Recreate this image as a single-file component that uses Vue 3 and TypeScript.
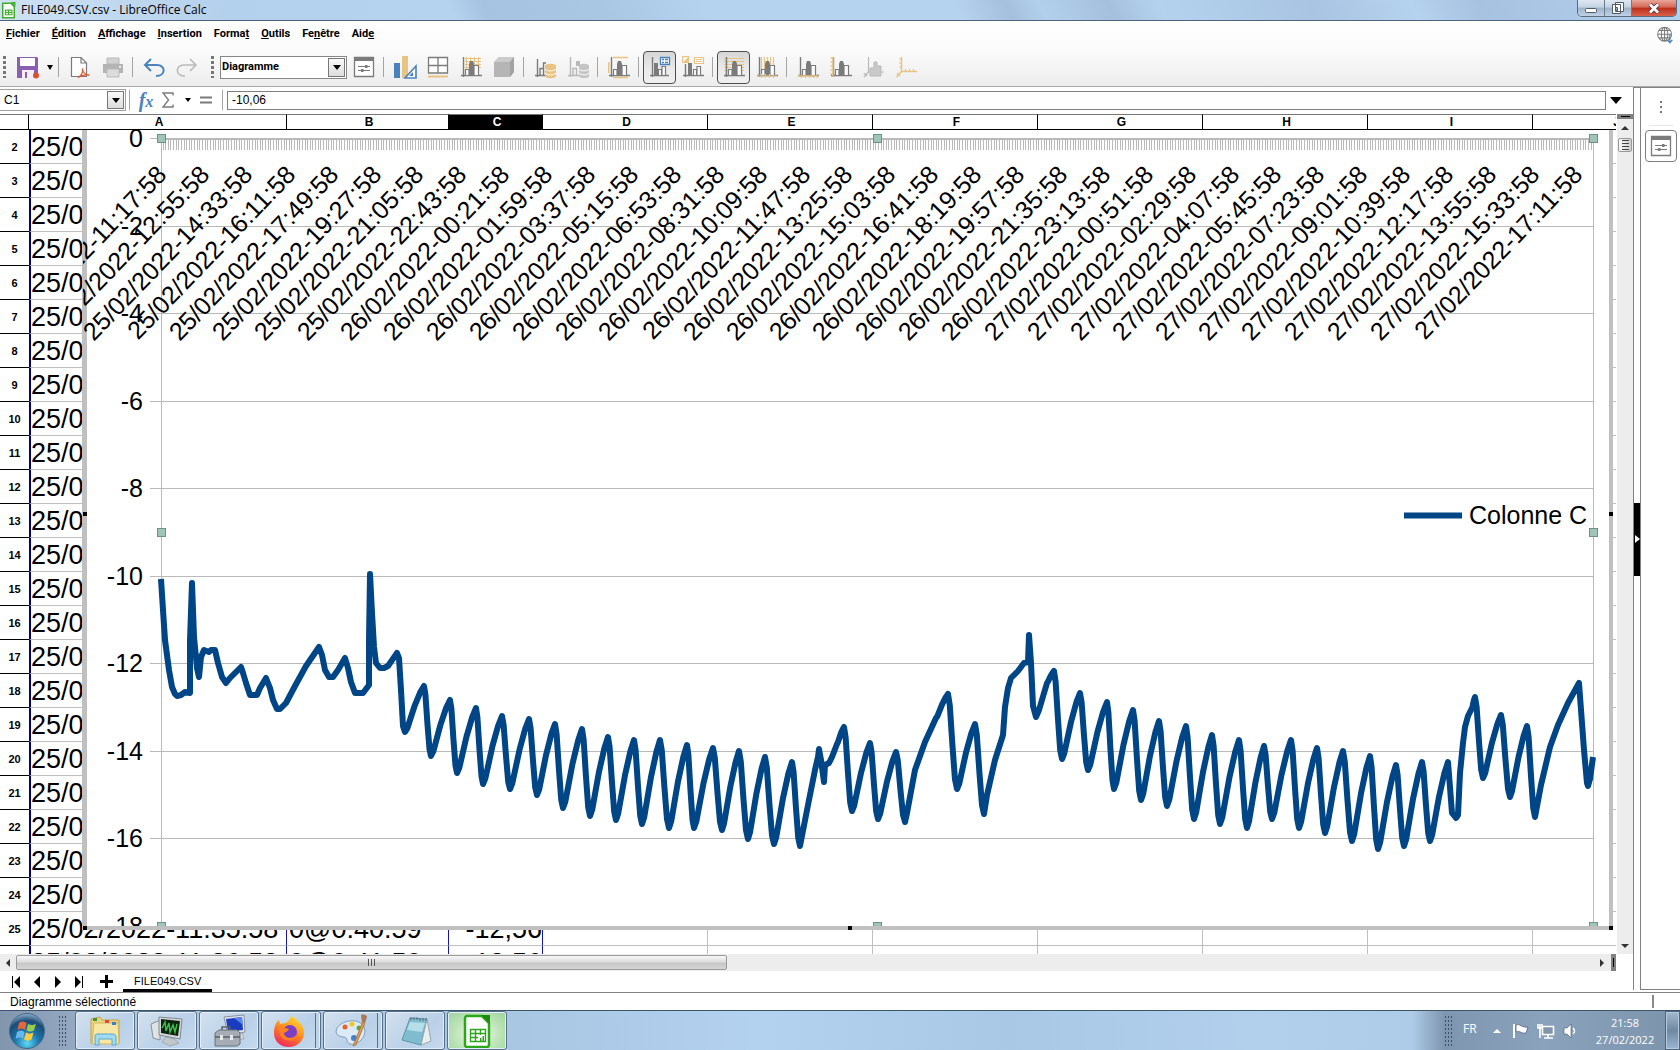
<script setup lang="ts">
import { h } from 'vue'

type Shape = [d: string, fill?: string, stroke?: string, width?: number]

const G = '#7b7b7b'
const L = '#b9b9b9'
const Y = '#e8c382'
const B = '#4a82bd'

const bars = (c: string): Shape[] => [
  ['M3.5 1V21M1 19.5H22', 'none', c, 1.4],
  ['M5.5 19V13.5H9V19M14 19V9.5H18.5V19', '#fff', c, 1.2],
  ['M9 19V8L10 5H13L14 8V19Z', c],
]

const glyphs: Record<string, Shape[]> = {
  save: [
    ['M0 1H20L21 2V22H0Z', '#8a5fb0'],
    ['M3 2H18V10H3Z', '#fff'],
    ['M5 14H17V22H5Z', '#f3eef8'],
    ['M8 16H10V22H8Z', '#8a5fb0'],
    ['M16 19.5A3 3 0 1 0 22 19.5A3 3 0 1 0 16 19.5', '#d9502e'],
  ],
  pdf: [
    ['M2.5 1.5H12L17.5 7V20.5H2.5Z', '#fff', G, 1.2],
    ['M12 1.5V7H17.5', 'none', G, 1.2],
    ['M9 21.5C12 20 14.500 16 13.500 12.500C13.500 16 16 19 20.500 19C16 18.500 12 19 9 21.500Z', 'none', '#d9603e', 1.4],
  ],
  print: [
    ['M5 2H17V8H5Z', '#d2d2d2', L, 1],
    ['M1 8H21V17H1Z', '#b4b4b4'],
    ['M5 13H17V21H5Z', '#dcdcdc', L, 1],
    ['M17 10H19V11.5H17Z', '#fff'],
  ],
  undo: [
    ['M8 3L2 9L8 15', 'none', B, 2],
    ['M2 9H14C23 9 23 20 13 20', 'none', B, 2],
  ],
  redo: [
    ['M14 3L20 9L14 15', 'none', L, 1.6],
    ['M20 9H8C-1 9 -1 20 9 20', 'none', L, 1.6],
  ],
  props: [
    ['M1.5 1.5H20.5V20.5H1.5Z', '#fff', G, 1.3],
    ['M1 1H21V5H1Z', G],
    ['M5 10.5H17M5 14.5H17', 'none', G, 1.2],
    ['M12 9H14.5V12H12ZM8 13H10.500V16H8Z', G],
  ],
  type: [
    ['M0 7H6V22H0Z', B],
    ['M8 0H14V22H8Z', Y],
    ['M22 10V22H11Z', '#fff', B, 1.6],
    ['M19 16V20H15Z', B],
  ],
  table: [
    ['M1.500 1.500H20.500V17H1.500ZM11 1.500V17M1.500 9.500H20.500', '#fff', G, 1.3],
    ['M1 20.500H21', 'none', Y, 2],
  ],
  wall: [
    ['M5 2.500H21M5 5.500H21M5 8.500H21M5 11.500H21M6.500 1V16M10.500 1V16M14.500 1V16M18.500 1V16', 'none', Y, 1.1],
    ...bars(G),
  ],
  cube: [
    ['M1 6L6 1H21V16L17 21H1Z', '#b5b5b5'],
    ['M1 6L6 1H21L17 6Z', '#cbcbcb'],
    ['M17 6L21 1V16L17 21Z', '#a2a2a2'],
  ],
  data: [
    ['M3.500 3V21M1 19.500H13M6 19V12.500H9.500V19M9.500 19V7H12', 'none', G, 1.4],
    ['M11 10C11 7 22 7 22 10V20C22 23 11 23 11 20Z', Y],
    ['M11 13C13 15.500 20 15.500 22 13M11 17C13 19.500 20 19.500 22 17', 'none', '#fff', 1],
  ],
  dataOff: [
    ['M3.500 1V21M1 19.500H13M6 19V12.500H9.500V19', 'none', L, 1.4],
    ['M9 5H13V10H9Z', L],
    ['M12 10C12 7 22 7 22 10V20C22 23 12 23 12 20Z', '#c4c4c4'],
    ['M12 13C14 15.500 20 15.500 22 13M12 17C14 19.500 20 19.500 22 17', 'none', '#fff', 1],
  ],
  titles: [['M5 1.500H20M5 21.500H20M.8 6V17', 'none', Y, 1.5], ...bars(G)],
  legend: [
    ['M3.500 1V21M1 19.500H20', 'none', G, 1.4],
    ['M5 7H9V19H5Z', G],
    ['M9.500 19V13.500H12.500V19M13 19V10.500H16.500V19', '#fff', G, 1.2],
    ['M11.500 1.500H20.500V8.500H11.500Z', '#fff', B, 1.3],
    ['M13 3.500H15M16 3.500H19M13 6.500H15M16 6.500H19', 'none', B, 1.3],
  ],
  labels: [
    ['M3.500 8V21M1 19.500H22', 'none', G, 1.4],
    ['M6 7H10V19H6Z', G],
    ['M11.500 19V13.500H14.500V19M15 19V10.500H18.500V19', '#fff', G, 1.2],
    ['M.7 .7H6.500V6.500H.7ZM12.500 1.500H21.500V7.500H12.500ZM14 3.500H20M14 5.500H20', '#fff', Y, 1.2],
    ['M.7 6.500L6.500 .7V6.500Z', Y],
  ],
  hgrid: [['M1 2.500H21M1 5.500H21M1 8.500H21M1 11.500H21M1 14.500H21M3 1V20', 'none', Y, 1.2], ...bars(G)],
  vgrid: [
    ['M5.500 1V14M8.500 1V14M11.500 1V14M14.500 1V14M17.500 1V14', 'none', Y, 1.2],
    ...bars(G),
    ['M1 20H21M5.500 18V22M9.500 18V22M13.500 18V22M17.500 18V22', 'none', Y, 1.2],
  ],
  xaxis: [...bars(G), ['M1 20H21M4.500 20V22M8.500 20V22M12.500 20V22M16.500 20V22M20 20V22', 'none', Y, 1.3]],
  yaxis: [...bars(G), ['M3 1V21M.5 2H3M.5 6H3M.5 10H3M.5 14H3M.5 18H3', 'none', Y, 1.3]],
  zaxis: [
    ['M5.500 1V16H21M5.500 16L1 21M1 17L4 20', 'none', L, 1.2],
    ['M7 20V12H11V6H14V10H18V20Z', '#c9c9c9', L, 1],
  ],
  axes: [
    ['M5.500 1V15.500H21M5.500 15.500L.5 21', 'none', Y, 1.5],
    ['M3 3H5M3 7H5M3 11H5M9.500 13V15M13.500 13V15M17.500 13V15M1 17L4 20', 'none', Y, 1.2],
  ],
  globe: [
    ['M2 10A8.500 8.500 0 1 0 19 10A8.500 8.500 0 1 0 2 10M6.500 10A4 8.500 0 1 0 14.500 10A4 8.500 0 1 0 6.500 10M10.500 1.500V18.500M2 10H19M3.500 5.500H17.500M3.500 14.500H17.500', '#fff', G, 1.3],
    ['M17 10V20M14 17L17 20.500L20 17', 'none', B, 1.5],
  ],
  calc: [
    ['M3.500 1.500H14L18.500 6V20.500H3.500Z', '#fff', '#3fae2a', 2],
    ['M14 0H20V6Z', '#3fae2a'],
    ['M7 10.500H15.500M7 13.500H15.500M7 16.500H15.500M7 10V17M11 10V17M15.500 10V17', 'none', '#3fae2a', 1.4],
  ],
}

const Icon = (p: { name: string; size?: number }) =>
  h(
    'svg',
    { viewBox: '0 0 22 22', width: p.size ?? 22, height: p.size ?? 22, overflow: 'visible', 'aria-hidden': 'true' },
    glyphs[p.name].map(([d, fill, stroke, width]) => h('path', { d, fill: fill ?? 'none', stroke, 'stroke-width': width })),
  )
Icon.props = ['name', 'size']

const menus: [string, string, string][] = [
  ['', 'F', 'ichier'], ['', 'É', 'dition'], ['', 'A', 'ffichage'], ['', 'I', 'nsertion'],
  ['Forma', 't', ''], ['', 'O', 'utils'], ['Fe', 'n', 'être'], ['Aid', 'e', ''],
]

const chartTools: { id: string; label: string; on?: boolean }[][] = [
  [{ id: 'type', label: 'Type de diagramme' }, { id: 'table', label: 'Table de données' }, { id: 'wall', label: 'Paroi' }, { id: 'cube', label: 'Vue 3D' }],
  [{ id: 'data', label: 'Plages de données' }, { id: 'dataOff', label: 'Données' }],
  [{ id: 'titles', label: 'Titres' }],
  [{ id: 'legend', label: 'Légende', on: true }, { id: 'labels', label: 'Étiquettes' }],
  [{ id: 'hgrid', label: 'Grilles horizontales', on: true }, { id: 'vgrid', label: 'Grilles verticales' }],
  [{ id: 'xaxis', label: 'Axe X' }, { id: 'yaxis', label: 'Axe Y' }, { id: 'zaxis', label: 'Axe Z' }, { id: 'axes', label: 'Tous les axes' }],
]

const columns = ['A', 'B', 'C', 'D', 'E', 'F', 'G', 'H', 'I', 'J']
const two = (n: number) => String(n).padStart(2, '0')
const rows = Array.from({ length: 25 }, (_, i) => ({
  n: i + 2,
  a: `25/02/2022-11:${two(12 + i)}:58`,
  b: `0@0:${two(17 + i)}:59`,
  c: '-12,56',
}))

/* Plot geometry, in the chart object's own coordinates */
const left = 78
const right = 1510
const top = 8
const grid = Array.from({ length: 10 }, (_, i) => ({ y: top + Math.round(i * 87.5), label: i ? `-${i * 2}` : '0' }))

const ticks = (() => {
  let d = ''
  for (let x = left + 2; x < right; x += 2.63) d += `M${x.toFixed(1)} ${top}v12`
  return d
})()

const labels = Array.from({ length: 34 }, (_, i) => {
  const t = 25 * 1440 + 11 * 60 + 17 + i * 98
  const m = t % 1440
  return { x: Math.round(85 + i * 42.9), text: `${Math.floor(t / 1440)}/02/2022-${two(Math.floor(m / 60))}:${two(m % 60)}:58` }
})

type P = [number, number]
const opening: P[] = [
  [161, 579], [163, 610], [165, 640], [169, 670], [172, 687], [175, 694], [177, 696], [181, 695], [185, 692], [190, 693],
  [190, 640], [192, 583], [194, 637], [197, 668], [199, 677], [201, 657], [204, 650], [209, 652], [211, 650], [215, 650],
  [218, 663], [222, 677], [226, 683], [230, 678], [241, 667], [243, 673], [246, 683], [250, 695], [257, 695], [260, 688],
  [266, 678], [270, 688], [273, 700], [277, 709], [280, 709], [286, 703], [295, 686], [306, 666], [319, 647], [322, 655],
  [325, 670], [329, 677], [333, 677], [338, 670], [345, 658], [348, 668], [351, 682], [355, 693], [363, 693], [369, 685],
  [369, 640], [370, 574], [372, 613], [374, 647], [376, 663], [380, 668], [384, 668], [388, 666], [397, 653], [399, 658],
  [401, 690], [403, 726], [405, 732],
]
const runA: P[] = [
  [424, 686], [431, 756], [450, 700], [457, 773], [476, 708], [483, 784], [502, 716], [510, 789], [529, 719], [537, 795],
  [555, 724], [563, 808], [582, 729], [590, 816], [608, 737], [616, 820], [634, 740], [642, 824], [660, 740], [669, 828],
  [687, 745], [694, 828], [713, 748], [722, 830], [739, 751], [748, 839], [765, 757], [774, 844], [792, 762], [800, 846],
]
const bumpA: P[] = [[808, 805], [815, 770], [818, 757], [819, 749], [821, 760], [824, 782], [825, 765], [829, 763], [832, 757], [837, 744]]
const runB: P[] = [[844, 727], [852, 811], [870, 743], [878, 819], [896, 752], [905, 822]]
const climbB: P[] = [[907, 813], [915, 770], [925, 742], [936, 718]]
const runC: P[] = [[948, 694], [957, 789], [975, 724], [984, 814]]
const climbC: P[] = [
  [987, 795], [995, 760], [1003, 735], [1005, 707], [1008, 688], [1011, 678], [1018, 671], [1024, 663], [1028, 662],
  [1029, 635], [1031, 663], [1033, 706], [1036, 717], [1039, 710], [1047, 683],
]
const runD: P[] = [
  [1054, 671], [1062, 759], [1080, 693], [1088, 770], [1107, 702], [1114, 789], [1133, 710], [1141, 800], [1159, 721],
  [1167, 806], [1186, 726], [1194, 819], [1212, 735], [1220, 824], [1239, 740], [1247, 828], [1264, 746], [1272, 819],
  [1291, 740], [1299, 828], [1317, 748], [1325, 833], [1343, 751], [1352, 841], [1370, 756], [1378, 849], [1396, 765],
  [1404, 846], [1422, 762], [1430, 841],
]
const climbD: P[] = [
  [1448, 762], [1452, 813], [1456, 818], [1458, 815], [1460, 773], [1463, 743], [1465, 727], [1468, 716], [1472, 708],
]
const runE: P[] = [[1475, 697], [1483, 778], [1501, 715], [1510, 797], [1527, 726], [1535, 817]]
const closing: P[] = [[1541, 785], [1550, 747], [1558, 725], [1568, 703], [1579, 683], [1584, 750], [1587, 783], [1588, 786], [1590, 779], [1593, 757]]

/* Each cycle rises quickly, flattens towards the peak, then falls steeply. */
const swing = (points: P[], from: P): P[] => {
  const out: P[] = []
  let prev = from
  for (const p of points) {
    const [dx, dy] = [p[0] - prev[0], p[1] - prev[1]]
    const curve = dy < 0 ? [[0.12, 0.08], [0.5, 0.56], [0.8, 0.86]] : [[0.2, 0.12], [0.5, 0.55], [0.78, 0.9]]
    for (const [fx, fy] of curve) out.push([prev[0] + dx * fx, prev[1] + dy * fy])
    out.push(p)
    prev = p
  }
  return out
}
const all: P[] = [...opening]
const add = (pts: P[], cyc: boolean) => all.push(...(cyc ? swing(pts, all[all.length - 1]) : pts))
add(runA, true)
add(bumpA, false)
add(runB, true)
add(climbB, false)
add(runC, true)
add(climbC, false)
add(runD, true)
add(climbD.slice(0, 1), true)
add(climbD.slice(1), false)
add(runE, true)
add(closing, false)
const series = all.map(([x, y]) => `${(x - 83).toFixed(1)},${(y - 130).toFixed(1)}`).join(' ')

const handles = [78, 794, 1510].flatMap((x) => [8, 402, 796].filter((y) => !(x === 794 && y === 402)).map((y) => ({ x, y })))

const tasks = ['folder', 'monitor', 'tools', 'firefox', 'paint', 'notes', 'calc']
</script>

<template>
  <div class="app">
    <header class="title">
      <Icon name="calc" :size="17" />
      <h1>FILE049.CSV.csv - LibreOffice Calc</h1>
      <div class="winbtns">
        <button aria-label="Réduire"><svg width="14" height="10"><rect x="1.500" y="5.500" width="11" height="4" rx="1" fill="#fff" stroke="#4c5a6c" /></svg></button>
        <button aria-label="Restaurer"><svg width="14" height="14"><path d="M4.500 1.500H12.500V10.500H4.500ZM1.500 3.500H9.500V12.500H1.500Z" fill="#fff" stroke="#4c5a6c" /><path d="M4.500 6.500H6.500V9.500H4.500Z" fill="#9db4cc" stroke="#4c5a6c" /></svg></button>
        <button class="close" aria-label="Fermer"><svg width="12" height="11"><path d="M2 1.500L10 9.500M10 1.500L2 9.500" stroke="#53303a" stroke-width="4.500" /><path d="M2 1.500L10 9.500M10 1.500L2 9.500" stroke="#fff" stroke-width="2.800" /></svg></button>
      </div>
    </header>

    <div class="bars">
      <nav class="menu">
        <a v-for="m in menus" :key="m.join('')" href="#">{{ m[0] }}<u>{{ m[1] }}</u>{{ m[2] }}</a>
        <button class="globe" aria-label="Mise à jour"><Icon name="globe" :size="18" /></button>
      </nav>
      <div class="toolbar">
        <i class="grip"></i>
        <button aria-label="Enregistrer"><Icon name="save" /></button>
        <button class="drop" aria-label="Options d'enregistrement"><svg width="6" height="5"><path d="M0 0H6L3 5Z" /></svg></button>
        <i class="sep"></i>
        <button aria-label="Exporter en PDF"><Icon name="pdf" /></button>
        <button aria-label="Imprimer"><Icon name="print" /></button>
        <i class="sep"></i>
        <button aria-label="Annuler"><Icon name="undo" /></button>
        <button aria-label="Rétablir"><Icon name="redo" /></button>
        <i class="grip second"></i>
        <label class="combo">
          <select aria-label="Élément du diagramme"><option>Diagramme</option></select>
          <span class="arrow"><svg width="8" height="5"><path d="M0 0H8L4 5Z" /></svg></span>
        </label>
        <button aria-label="Formater la sélection"><Icon name="props" /></button>
        <template v-for="(g, i) in chartTools" :key="i">
          <i class="sep"></i>
          <button v-for="t in g" :key="t.id" :class="{ on: t.on }" :aria-label="t.label"><Icon :name="t.id" /></button>
        </template>
      </div>
    </div>

    <div class="body">
      <main class="main">
        <div class="formula">
          <div class="namebox">
            <input value="C1" aria-label="Zone de nom" />
            <button class="arrow" aria-label="Liste des noms"><svg width="8" height="5"><path d="M0 0H8L4 5Z" /></svg></button>
          </div>
          <i class="sep"></i>
          <button class="fx" aria-label="Assistant Fonctions"><em>f</em><em class="x">x</em></button>
          <button class="sum" aria-label="Somme"><svg width="12" height="16"><path d="M11 3.500V1H1L6.500 8L1 15H11V12.500" fill="none" stroke="#7b7b7b" stroke-width="1.400" /></svg></button>
          <button class="drop" aria-label="Fonctions"><svg width="6" height="4"><path d="M0 0H6L3 4Z" /></svg></button>
          <button class="eq" aria-label="Formule"><svg width="12" height="8"><path d="M0 1.500H12M0 6.500H12" stroke="#7b7b7b" stroke-width="2" /></svg></button>
          <i class="sep"></i>
          <input class="content" value="-10,06" aria-label="Ligne de saisie" />
          <button class="expand" aria-label="Développer la barre de formule"><svg width="12" height="7"><path d="M0 0H12L6 7Z" /></svg></button>
        </div>

        <div class="work">
          <div class="sheet">
            <table>
              <colgroup><col class="cn" /><col class="ca" /><col class="cb" /><col class="cc" /><col v-for="n in 7" :key="n" class="cd" /></colgroup>
              <thead>
                <tr><th></th><th v-for="c in columns" :key="c" :class="{ sel: c === 'C' }">{{ c }}</th></tr>
              </thead>
              <tbody>
                <tr v-for="r in rows" :key="r.n">
                  <th>{{ r.n }}</th><td class="a">{{ r.a }}</td><td class="b">{{ r.b }}</td><td class="c">{{ r.c }}</td>
                  <td v-for="n in 7" :key="n"></td>
                </tr>
              </tbody>
            </table>

            <div class="chart">
              <svg width="1526" height="796" viewBox="0 0 1526 796" role="img" aria-label="Colonne C">
                <g stroke="#b9b9b9" shape-rendering="crispEdges">
                  <line v-for="g in grid" :key="g.y" :x1="left - 11" :x2="right" :y1="g.y + 0.5" :y2="g.y + 0.5" />
                  <line :x1="left" :x2="left" :y1="top" y2="796" />
                  <line :x1="right" :x2="right" :y1="top" y2="796" />
                  <line :x1="left" :x2="right" :y1="top + 1" :y2="top + 1" stroke-width="2" />
                  <path :d="ticks" />
                </g>
                <g class="ctext">
                  <text v-for="g in grid" :key="g.y" x="60" :y="g.y + 9" text-anchor="end">{{ g.label }}</text>
                  <text v-for="l in labels" :key="l.x" :transform="`translate(${l.x} 46) rotate(-46)`" text-anchor="end">{{ l.text }}</text>
                  <text x="1386" y="394">Colonne C</text>
                </g>
                <line x1="1321" x2="1379" y1="385.500" y2="385.500" stroke="#004586" stroke-width="6" />
                <polyline :points="series" fill="none" stroke="#004586" stroke-width="6" stroke-linejoin="round" />
                <rect v-for="(k, i) in handles" :key="i" :x="k.x - 3.5" :y="k.y - 3.5" width="8" height="8" fill="#a0c4b6" stroke="#6b9486" />
              </svg>
              <i class="hd bl"></i><i class="hd bm"></i><i class="hd br"></i><i class="hd ml"></i><i class="hd mr"></i>
            </div>
          </div>
          <div class="vscroll">
            <i class="split"></i>
            <svg width="8" height="4"><path d="M0 4H8L4 0Z" fill="#333" /></svg>
            <span class="vthumb"><i></i><i></i><i></i><i></i></span>
            <span class="fill"></span>
            <svg width="8" height="4"><path d="M0 0H8L4 4Z" fill="#333" /></svg>
          </div>
        </div>

        <div class="hscroll">
          <svg width="16" height="8"><path d="M10 0V8L6 4Z" fill="#333" /></svg>
          <span class="hthumb"><i></i><i></i><i></i></span>
          <span class="fill"></span>
          <svg width="16" height="8"><path d="M6 0V8L10 4Z" fill="#333" /></svg>
          <i class="hsplit"></i>
        </div>

        <div class="tabs">
          <button aria-label="Première feuille"><svg width="8" height="12"><path d="M0 0H1V12H0ZM8 0V12L2 6Z" /></svg></button>
          <button aria-label="Feuille précédente"><svg width="8" height="12"><path d="M7 0V12L1 6Z" /></svg></button>
          <button aria-label="Feuille suivante"><svg width="8" height="12"><path d="M1 0V12L7 6Z" /></svg></button>
          <button aria-label="Dernière feuille"><svg width="8" height="12"><path d="M0 0V12L6 6ZM7 0H8V12H7Z" /></svg></button>
          <button class="plus" aria-label="Ajouter une feuille"><svg width="13" height="13"><path d="M5 0H8V5H13V8H8V13H5V8H0V5H5Z" /></svg></button>
          <a class="tab" href="#">FILE049.CSV</a>
        </div>
      </main>

      <div class="splitter"><button aria-label="Masquer le volet latéral"><svg width="5" height="8"><path d="M0 0V8L5 4Z" fill="#fff" /></svg></button></div>
      <aside class="side">
        <button class="dots" aria-label="Paramètres du volet latéral"><i></i><i></i><i></i></button>
        <button class="deck" aria-label="Propriétés"><Icon name="props" /></button>
      </aside>
    </div>

    <footer class="status"><span>Diagramme sélectionné</span><i></i></footer>

    <div class="taskbar">
      <button class="orb" aria-label="Démarrer">
        <svg width="38" height="38" viewBox="0 0 38 38">
          <defs><radialGradient id="orbg" cx=".5" cy=".85" r=".85"><stop offset="0" stop-color="#5fd8f5" /><stop offset=".4" stop-color="#1c76ab" /><stop offset=".75" stop-color="#1c4a75" /><stop offset="1" stop-color="#8fb0cc" /></radialGradient></defs>
          <circle cx="19" cy="19" r="17.500" fill="url(#orbg)" stroke="#46688a" />
          <path d="M11 11C14 9 16 9 18.500 11L17 18C14 16 12 16 9.500 18Z" fill="#e8663a" />
          <path d="M20 12C23 13.500 25 13.500 28 11.500L26 18.500C23 20 21 20 18.500 18.500Z" fill="#9bcb4c" />
          <path d="M9 20C11.500 18 14 18 16.500 20L15 26.500C12.500 25 10.500 25 7.500 27Z" fill="#6cb6ee" />
          <path d="M18 20.500C20.500 22 23 22 25.500 20.500L23.500 27.500C21 29 19 29 16 27.500Z" fill="#fbcc3f" />
        </svg>
      </button>
      <i class="dotgrid"></i>
      <button v-for="t in tasks" :key="t" class="task" :class="t" :aria-label="t">
        <svg width="34" height="34" viewBox="0 0 34 34">
          <template v-if="t === 'folder'">
            <path d="M3 5L12 3L14 6H31V29H3Z" fill="#ecd27a" stroke="#c4a24a" />
            <path d="M6 9H30L31 30H4Z" fill="#f7e7a4" stroke="#d3b763" />
            <path d="M5 4H9V7H5Z" fill="#3a9a3a" /><path d="M17 6H21V9H17Z" fill="#d9503a" /><path d="M24 8H28V11H24Z" fill="#3a7ed0" />
            <path d="M7 31V22C7 20 9 20 10 20H24C27 20 28 21 28 23V31H24V25H11V31Z" fill="#9fdcf2" stroke="#5aa8cc" />
          </template>
          <template v-else-if="t === 'monitor'">
            <path d="M1 10L8 7L10 9V26L3 24Z" fill="#dfe3e6" stroke="#8a9096" />
            <path d="M9 3L32 5L30 25L9 21Z" fill="#d5d9dc" stroke="#82888e" />
            <path d="M11 5L30 7L28 22L11 19Z" fill="#0c2410" />
            <path d="M12 14L15 8L16 17L19 9L20 18L23 11L25 18L27 10" fill="none" stroke="#3cbf48" stroke-width="1.500" />
            <path d="M16 23L24 25L29 29L20 32L12 28Z" fill="#c2c7cb" stroke="#8a9096" stroke-width=".6" />
          </template>
          <template v-else-if="t === 'tools'">
            <path d="M12 3L32 1L33 18L16 21Z" fill="#e0e4ea" stroke="#8a929e" />
            <path d="M14 5L30 3L31 16L16 18Z" fill="#1a3cc0" /><path d="M22 4L30 3L31 11Z" fill="#5a86ea" />
            <path d="M18 20L30 19L32 25H22Z" fill="#d9dde2" stroke="#8a929e" stroke-width=".6" />
            <path d="M3 19L7 16H25L28 19V30L25 32H3Z" fill="#a6adb5" stroke="#6a7078" /><path d="M3 23H28M10 16V13H18V16" fill="none" stroke="#5a6068" stroke-width="1.500" />
            <path d="M8 21H11V26H8ZM18 21H21V26H18Z" fill="#e6e9ec" />
          </template>
          <template v-else-if="t === 'firefox'">
            <defs><linearGradient id="ffg" x1=".8" y1="0" x2=".3" y2="1"><stop offset="0" stop-color="#ffe03a" /><stop offset=".5" stop-color="#ff8a1c" /><stop offset="1" stop-color="#f0245c" /></linearGradient></defs>
            <path d="M20 2C25 6 32 10 32 19C32 27 25 33 17 33C8 33 2 27 2 19C2 13 4 8 7 6L8 10L13 9C17 8 17 5 20 2Z" fill="url(#ffg)" />
            <circle cx="18" cy="18" r="7" fill="#7a3fc4" /><path d="M7 14C10 13 14 14 17 15C16 18 12 18 12 20C14 25 21 25 24 21C23 29 10 28 8 20Z" fill="#ff8220" />
          </template>
          <template v-else-if="t === 'paint'">
            <path d="M3 14C9 5 26 4 30 13C34 23 23 32 16 30C11 28 15 24 10 23C5 23 0 20 3 14Z" fill="#dceaf5" stroke="#7b9fc0" />
            <circle cx="11" cy="13" r="2.500" fill="#e8642a" /><circle cx="18" cy="10" r="2.500" fill="#f2c52a" /><circle cx="25" cy="14" r="2.500" fill="#54a846" /><circle cx="20" cy="24" r="3" fill="#3f83d4" />
            <path d="M29 7L31 9L22 31L19 32Z" fill="#e09a50" stroke="#a5662a" stroke-width=".7" /><path d="M27 1C30 0 33 1 33 3L31 9H28Z" fill="#a97a5a" />
          </template>
          <template v-else-if="t === 'notes'">
            <path d="M12 4L29 5L23 31L4 26Z" fill="#7fbccf" stroke="#5d94a6" /><path d="M29 5L33 27L23 31Z" fill="#e9eef0" stroke="#9aa6ac" />
            <path d="M13 3V6M16 3V6M19 3V6M22 4V7M25 4V7M28 4V7" stroke="#5a6a74" /><path d="M12 8L27 9L24 18L9 16Z" fill="#b6dee8" />
          </template>
          <template v-else>
            <path d="M7 2H22L29 9V31C29 32 28 33 27 33H7C6 33 5 32 5 31V4C5 3 6 2 7 2Z" fill="#fff" stroke="#2ea61c" stroke-width="2.500" />
            <path d="M21 1H30V10Z" fill="#1d8a10" />
            <path d="M10.500 15.500H25.500V27.500H10.500ZM10.500 19.500H25.500M10.500 23.500H18M15.500 15.500V27.500M20.500 15.500V21" fill="none" stroke="#2ea61c" stroke-width="1.400" />
            <path d="M20 27V24H21.500V27ZM22.500 27V22H24V27Z" fill="#2ea61c" />
          </template>
        </svg>
      </button>
      <span class="fill"></span>
      <i class="dotgrid right"></i>
      <span class="lang">FR</span>
      <svg class="tray" width="84" height="20" viewBox="0 0 84 20">
        <path d="M0 12H8L4 8Z" fill="#fff" />
        <path d="M21 3V17" stroke="#fff" stroke-width="2" /><path d="M23 4C27 2 28 7 35 6L33 12C28 13 27 9 23 11Z" fill="#fff" stroke="#44566c" stroke-width=".7" />
        <path d="M49.500 5.500H60.500V13.500H49.500Z" fill="#8094ac" stroke="#fff" stroke-width="1.600" /><path d="M51 17H60M55 14V17M47 3V9M45 3V7H49V3M47 9V17" stroke="#fff" stroke-width="1.600" fill="none" />
        <path d="M71 7H74L78 3V17L74 13H71Z" fill="#fff" stroke="#44566c" stroke-width=".6" /><path d="M80 7C82 9 82 11 80 13" fill="none" stroke="#fff" stroke-width="1.500" />
      </svg>
      <div class="clock"><time>21:58</time><time>27/02/2022</time></div>
      <button class="desk" aria-label="Afficher le bureau"></button>
    </div>
  </div>
</template>

<style>
body { margin: 0; overflow: hidden; }
</style>

<style scoped>
.app { display: flex; flex-direction: column; height: 100vh; background: #fff; color: #000; font: 12px/16px "Liberation Sans", Arial, sans-serif; }
.app * { box-sizing: border-box; }
button { display: flex; align-items: center; justify-content: center; padding: 0; border: 0; background: none; font: inherit; }
svg { flex: none; display: block; }
a { color: inherit; text-decoration: none; }
.fill { flex: 1; }

.title { display: flex; align-items: center; gap: 4px; height: 21px; border-bottom: 1px solid #4d6478; background: linear-gradient(65deg, #cfe2f3 0, #b3d0ec 14%, #b5d2ee 27%, #a6c4e2 29%, #a9c6e2 36%, #b5d2ee 42%, #b5d2ee 57%, #a5c0dc 60%, #b2d0ec 62%, #a5c0dc 66%, #b4d2ee 69%, #a8c4e2 78%, #b5d2ee 84%, #a6c2e0 88%, #b3d0ee 100%); }
.title h1 { flex: 1; margin: 0; font: 400 12px/20px "Open Sans", "Noto Sans", sans-serif; }
.winbtns { display: flex; align-self: flex-start; height: 17px; margin-right: 3px; border: 1px solid #5a6c80; border-top: 0; border-radius: 0 0 5px 5px; overflow: hidden; }
.winbtns button { width: 27px; height: 16px; border-right: 1px solid #6b7c8f; background: linear-gradient(#dfe9f3, #c3d2e2 45%, #9fb3c9 50%, #c0d2e4); }
.winbtns .close { width: 44px; border: 0; background: linear-gradient(#e9a598, #d4695a 45%, #bb2f1a 50%, #d8604a); }

.bars { height: 66px; border-bottom: 1px solid #a9a9a9; background: linear-gradient(#fff, #fbfbfb 45%, #ededed); }
.menu { display: flex; gap: 12px; height: 27px; padding: 5px 6px 0 6px; font: 700 11px/16px Roboto, "Liberation Sans", sans-serif; }
.globe { margin-left: auto; align-self: flex-start; }
.toolbar { display: flex; align-items: center; height: 38px; padding-left: 3px; }
.toolbar button { width: 33px; height: 33px; flex: none; }
.toolbar button.on { border: 1px solid #4e4e4e; border-radius: 4px; background: linear-gradient(#d6d6d6, #e9e9e9 50%, #f0f0f0); }
.toolbar .drop { width: 11px; }
.grip { width: 3px; height: 22px; margin-right: 5px; background: repeating-linear-gradient(#777 0 3px, transparent 3px 5px); }
.grip.second { margin: 0 6px 0 8px; }
.sep { flex: none; width: 8px; height: 20px; background: linear-gradient(#a4a4a4, #a4a4a4) 3px 0 / 1px 100% no-repeat; }
.combo { display: flex; width: 127px; height: 23px; border: 1px solid #878787; background: #fff; padding: 1px; }
.combo select { flex: 1; min-width: 0; border: 0; padding: 0; appearance: none; background: #fff; color: #000; font: 700 11px/18px Roboto, "Liberation Sans", sans-serif; }
.arrow, .namebox .arrow { display: flex; align-items: center; justify-content: center; flex: none; width: 17px; border: 1px solid #777; background: linear-gradient(#fafafa, #dcdcdc); }

.body { flex: 1; display: flex; min-height: 0; border-bottom: 1px solid #828282; }
.main { flex: 1; min-width: 0; display: flex; flex-direction: column; }
.formula { display: flex; align-items: center; height: 27px; padding: 0 10px 1px 0; flex: none; }
.namebox { display: flex; width: 126px; height: 22px; padding: 1px; border: 1px solid #a0a0a0; border-left: 0; }
.namebox input { flex: 1; min-width: 0; border: 0; padding: 0 3px; font: 12px/16px "Liberation Sans", Arial, sans-serif; }
.fx { width: 24px; color: #4a82bd; font: 700 20px/20px "Liberation Serif", serif; }
.fx .x { font-size: 16px; padding-top: 4px; }
.sum { width: 20px; }
.formula .drop { width: 20px; }
.eq { width: 16px; margin-right: 5px; }
.formula .content { flex: 1; height: 19px; border: 1px solid #808080; padding: 0 4px; font: 12px/16px "Liberation Sans", Arial, sans-serif; }
.expand { width: 17px; padding-left: 3px; }

.work { flex: 1; display: flex; min-height: 0; }
.sheet { position: relative; flex: 1; min-width: 0; overflow: hidden; }
table { table-layout: fixed; width: 1698px; border-spacing: 0; }
.cn { width: 29px; } .ca { width: 258px; } .cb { width: 162px; } .cc { width: 94px; } .cd { width: 165px; }
th, td { padding: 0; white-space: nowrap; overflow: hidden; }
thead th { height: 16px; padding-left: 3px; border: 1px solid #000; border-width: 1px 1px 1px 0; border-top-color: #777; font: 700 12px/14px "Liberation Sans", Arial, sans-serif; }
thead .sel { background: #000; color: #fff; }
tbody th { height: 34px; border-bottom: 1px solid #000; font: 700 11px/14px "Liberation Sans", Arial, sans-serif; }
td { height: 34px; border-right: 1px solid #c0c0c0; border-bottom: 1px solid #c0c0c0; font-size: 27px; line-height: 32px; }
td.a, td.b, td.c { border-right-color: #1414b4; }
td.a { border-left: 2px solid #000080; }
td.b { padding-left: 2px; }
td.c { text-align: right; }

.chart { position: absolute; left: 82px; top: 16px; width: 1531px; height: 800px; border: solid #c0c0c0; border-width: 0 4px 4px 5px; background: #fff; }
.chart > svg { margin-left: -4px; }
.ctext { font: 25px "Liberation Sans", Arial, sans-serif; }
.hd { position: absolute; width: 4px; height: 4px; background: #000; }
.bl { left: -4px; bottom: -4px; } .bm { left: 50%; bottom: -4px; } .br { right: -4px; bottom: -4px; }
.ml { left: -4px; top: 382px; } .mr { right: -4px; top: 382px; }

.vscroll { display: flex; flex-direction: column; align-items: center; flex: none; width: 16px; margin-left: 1px; padding-bottom: 6px; background: #ededed; }
.split { width: 100%; height: 5px; margin-bottom: 7px; background: linear-gradient(#000, #000) center / 9px 1px no-repeat, #808080; }
.vthumb { display: flex; flex-direction: column; align-items: center; justify-content: center; gap: 2px; width: 14px; height: 14px; margin-top: 8px; border: 1px solid #999; border-radius: 2px; background: linear-gradient(90deg, #f8f8f8, #cfcfcf); }
.vthumb i { width: 7px; height: 1px; background: #444; }
.hscroll { display: flex; align-items: center; flex: none; height: 17px; margin-right: 17px; background: #ededed; }
.hthumb { display: flex; align-items: center; justify-content: center; gap: 2px; width: 44%; height: 15px; border: 1px solid #9a9a9a; border-radius: 2px; background: linear-gradient(#f7f7f7, #dedede 45%, #c6c6c6 55%, #d6d6d6); }
.hthumb i { width: 1px; height: 7px; background: #555; }
.hsplit { align-self: stretch; width: 5px; margin-left: 1px; background: linear-gradient(#000, #000) center / 1px 9px no-repeat, #808080; }

.tabs { display: flex; align-items: center; flex: none; height: 21px; padding-left: 12px; gap: 13px; }
.tabs button { width: 8px; height: 100%; }
.tabs .plus { width: 13px; margin-left: 4px; }
.tab { align-self: stretch; margin-left: -3px; padding: 1px 11px 0; border-bottom: 3px solid #000; line-height: 18px; font-size: 11px; }

.splitter { display: flex; align-items: center; flex: none; width: 8px; margin-bottom: 2px; border: solid #828282; border-width: 1px 1px 0; }
.splitter button { width: 6px; height: 73px; background: #000; }
.side { display: flex; flex-direction: column; align-items: center; flex: none; width: 39px; margin-bottom: 2px; border: solid #828282; border-width: 1px 0; }
.dots { flex-direction: column; gap: 3px; width: 24px; height: 38px; border-bottom: 1px solid #e6e6e6; }
.dots i { width: 2px; height: 2px; background: #777; }
.deck { width: 32px; height: 32px; margin-top: 4px; border: 1px solid #7d7d7d; border-radius: 4px; }

.status { display: flex; align-items: center; justify-content: space-between; flex: none; height: 17px; padding: 0 26px 0 10px; }
.status i { width: 2px; height: 13px; background: #888; }

.taskbar { display: flex; align-items: center; flex: none; height: 40px; border-top: 1px solid #3e556c; background: linear-gradient(90deg, #8195ad 0, #93a8c0 70px, #b2cae2 130px, #a9c6e2 31%, #b3d2f0 45%, #a8c8e6 60%, #b2d0ec 75%, #aecce8 84%, #7f96b0 86%, #8ba2bc 92%, #7c93ac 100%); }
.orb { width: 54px; height: 39px; }
.dotgrid { width: 9px; height: 31px; margin: 0 8px 0 4px; background: radial-gradient(circle, #3d4e62 1px, transparent 1px) 0 0 / 3px 4px; }
.dotgrid.right { margin: 0 10px 0 0; }
.task { width: 60px; height: 39px; margin-right: 2px; border: 1px solid #56708a; border-radius: 3px; box-shadow: inset 0 0 0 1px #e4eef8; background: linear-gradient(135deg, #d3e1ef, #b9d0e8 60%, #c6daee); }
.task.firefox, .task.paint { box-shadow: inset 0 0 0 1px #e4eef8, inset -4px 0 0 #bfd3e8, inset -5px 0 0 #56708a; padding-right: 4px; }
.task.calc { background: radial-gradient(ellipse at 50% 60%, #f2fbea, #b9e2b4 60%, #9dd39c); }
.lang { width: 30px; color: #fff; font: 12px/16px "Open Sans", sans-serif; padding-bottom: 4px; }
.clock { display: flex; flex-direction: column; align-items: center; width: 76px; margin-left: 10px; color: #fff; font: 11px/17px "Open Sans", sans-serif; }
.desk { width: 15px; height: 39px; margin-left: 2px; border: 1px solid #4e657e; box-shadow: inset 0 0 0 1px #b7c9dc; background: linear-gradient(#a4b8ce, #7088a2 50%, #9ab6d2); }
</style>
